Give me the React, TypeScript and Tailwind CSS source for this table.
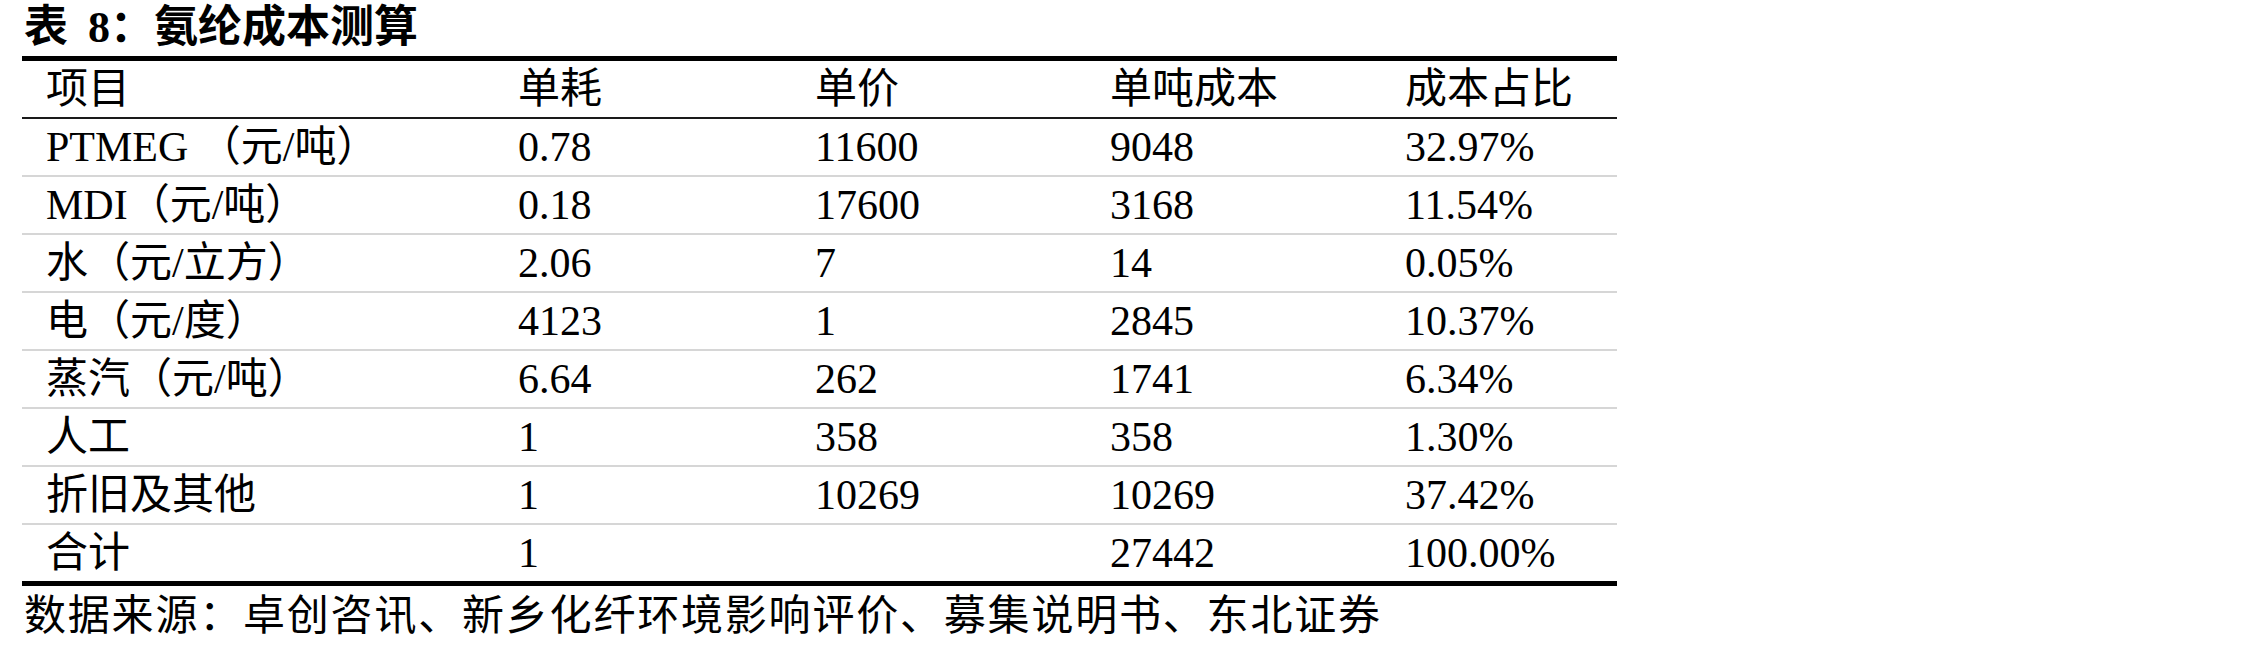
const rows = [
  ['PTMEG （元/吨）', '0.78', '11600', '9048', '32.97%'],
  ['MDI（元/吨）', '0.18', '17600', '3168', '11.54%'],
  ['水（元/立方）', '2.06', '7', '14', '0.05%'],
  ['电（元/度）', '4123', '1', '2845', '10.37%'],
  ['蒸汽（元/吨）', '6.64', '262', '1741', '6.34%'],
  ['人工', '1', '358', '358', '1.30%'],
  ['折旧及其他', '1', '10269', '10269', '37.42%'],
  ['合计', '1', '', '27442', '100.00%'],
]

const header = ['项目', '单耗', '单价', '单吨成本', '成本占比']

const cols = 'grid grid-cols-[473px_297px_295px_295px_235px]'

function Row({ cells, className }: { cells: string[]; className: string }) {
  return (
    <div className={`${cols} ${className}`}>
      {cells.map((c, i) => (
        <div key={i} className={`flex items-center ${i === 0 ? 'pl-[24px]' : 'pl-[23px]'}`}>
          {c}
        </div>
      ))}
    </div>
  )
}

export default function App() {
  return (
    <div
      className="h-[652px] w-[2268px] bg-white pl-[22px] text-black"
      style={{ fontFamily: '"Liberation Serif", "Noto Sans CJK SC", serif' }}
    >
      <div className="flex h-[56px] items-center pl-[2px] text-[44px] font-bold leading-none">
        <span>表</span>
        <span className="ml-[20px]">8：</span>
        <span>氨纶成本测算</span>
      </div>

      <div className="w-[1595px] text-[42px] leading-none">
        <div className="h-[5px] bg-black" />
        <Row cells={header} className="h-[56px]" />
        <div className="h-[2px] bg-[#1a1a1a]" />
        {rows.map((r, i) => (
          <Row
            key={i}
            cells={r}
            className={
              i < rows.length - 1
                ? 'h-[58px] border-b-2 border-[#d6d6d6]'
                : 'h-[56px]'
            }
          />
        ))}
        <div className="h-[5px] bg-black" />
      </div>

      <div className="flex h-[60px] items-center pl-[2px] text-[42px] leading-none tracking-[1.8px]">
        数据来源：卓创咨讯、新乡化纤环境影响评价、募集说明书、东北证券
      </div>
    </div>
  )
}
